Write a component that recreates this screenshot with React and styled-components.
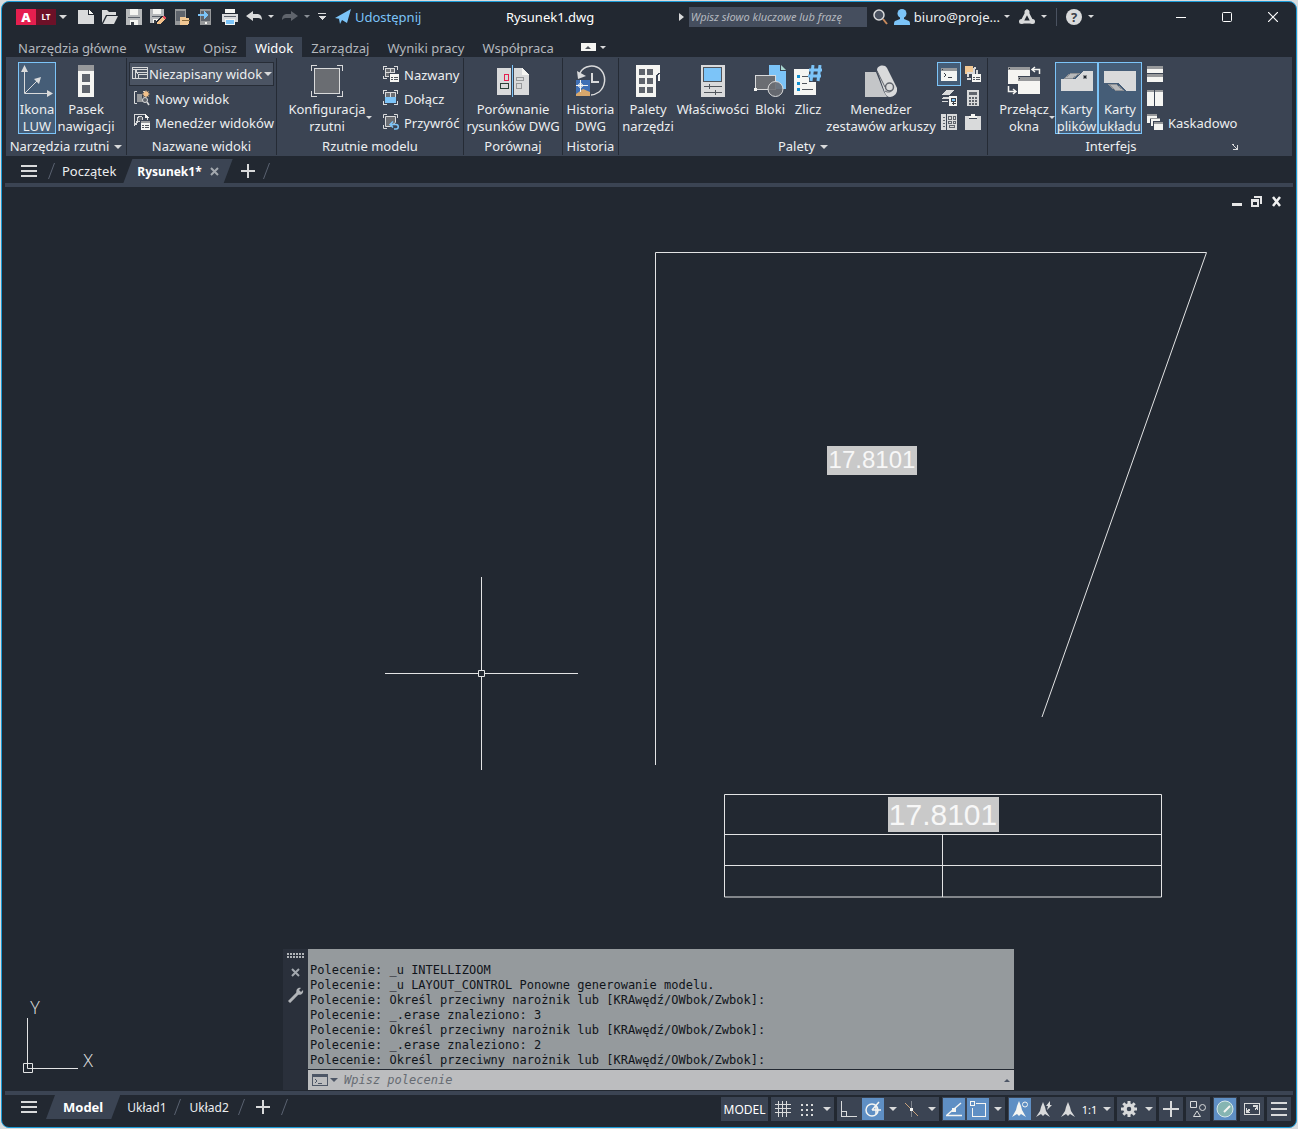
import React, {useState} from 'react'
import styled, {createGlobalStyle} from 'styled-components';

const GlobalStyle = createGlobalStyle`
    * {
        box-sizing: border-box;
    }
    body {
        margin: 0;
        background: #d9dcde;
        font-family: "Noto Sans", "Open Sans", sans-serif;
        font-size: 13px;
        color: #eceef0;
    }
    button, input, select {
        font: inherit;
        color: inherit;
        margin: 0;
        padding: 0;
        border: 0;
        background: none;
        outline: none;
    }
    svg {
        display: block;
        flex: none;
    }
`;
const Page = styled.div`
    min-height: 100vh;
    padding: 1px;
    display: flex;
`;
const Frame = styled.div`
    flex: 1;
    min-width: 0;
    display: flex;
    flex-direction: column;
    background: #222831;
    border: 1px solid #1b9bd7;
    border-radius: 8px;
    overflow: hidden;
`;
const Caret = styled.span`
    flex: none;
    width: 0;
    height: 0;
    border: ${p => p.$size || 3}px solid transparent;
    border-top-color: ${p => p.$color || '#d9dadb'};
    border-bottom: 0;
`;

/* title bar */
const TitleBar = styled.header`
    height: 35px;
    padding: 0 0 6px 14px;
    display: flex;
    align-items: center;
`;
const QuickAccess = styled.div`
    display: flex;
    align-items: center;
    gap: 8px;
`;
const LogoButton = styled.button`
    display: flex;
    align-items: center;
    gap: 3px;
    margin-right: 3px;
`;
const Logo = styled.span`
    display: flex;
    height: 16px;
    font-weight: 700;
    color: #fff;
    background: #6d1128;
`;
const LogoA = styled.span`
    width: 20px;
    text-align: center;
    line-height: 16px;
    font-size: 13px;
    font-weight: 900;
    background: #e51f4f;
`;
const LogoLt = styled.span`
    width: 20px;
    text-align: center;
    line-height: 16px;
    font-size: 8px;
`;
const IconButton = styled.button`
    height: 20px;
    display: flex;
    align-items: center;
    justify-content: center;
    gap: ${p => p.$gap || 0}px;
`;
const ShareButton = styled(IconButton)`
    margin-left: 1px;
    gap: 4px;
    font-size: 13px;
    color: #7cc4f8;
`;
const FileName = styled.div`
    flex: 1;
    text-align: center;
    font-size: 13px;
    color: #fff;
`;
const TitleRight = styled.div`
    display: flex;
    align-items: center;
`;
const Play = styled.span`
    border: 4px solid transparent;
    border-left: 5px solid #d9dadb;
    border-right: 0;
    margin-right: 5px;
`;
const Search = styled.input`
    width: 178px;
    height: 20px;
    padding: 0 2px;
    background: #454e5e;
    font-size: 11px;
    font-style: italic;
    &::placeholder {
        color: #b4b8be;
        opacity: 1;
    }
`;
const Account = styled.div`
    display: flex;
    align-items: center;
    gap: ${p => p.$gap || 9}px;
    margin-left: ${p => p.$left || 0}px;
`;
const Divider = styled.span`
    width: 1px;
    height: 18px;
    background: #4a5260;
`;
const WindowButtons = styled.div`
    display: flex;
    margin-left: 64px;
`;
const WindowButton = styled(IconButton)`
    width: 46px;
`;

/* ribbon */
const Tabs = styled.nav`
    height: 20px;
    padding-left: 7px;
    display: flex;
`;
const Tab = styled.button`
    padding: 1px 9px 0;
    line-height: 20px;
    color: ${p => (p.$active ? '#fff' : '#b3b7bd')};
    background: ${p => (p.$active ? '#3b4453' : 'none')};
`;
const TabToggle = styled(IconButton)`
    margin-left: 18px;
    gap: 4px;
`;
const ToggleBox = styled.span`
    width: 15px;
    height: 8px;
    display: flex;
    align-items: center;
    justify-content: center;
    background: #f5f5f2;
`;
const CaretUp = styled.span`
    border: 3px solid transparent;
    border-bottom-color: ${p => p.$color || '#50555c'};
    border-top: 0;
`;
const Ribbon = styled.div`
    height: 99px;
    margin: 0 4px;
    display: flex;
    background: #3b4453;
`;
const Panel = styled.section`
    flex: none;
    width: ${p => p.$width}px;
    margin: 1px 0;
    padding-top: 4px;
    border-right: ${p => (p.$last ? 0 : 1)}px solid #252b35;
    display: flex;
    flex-direction: column;
`;
const PanelBody = styled.div`
    height: 76px;
    padding-left: ${p => p.$left || 0}px;
    display: flex;
    align-items: flex-start;
    gap: ${p => p.$gap || 0}px;
`;
const PanelTitle = styled.div`
    height: 17px;
    line-height: 17px;
    display: flex;
    align-items: center;
    justify-content: center;
    gap: 5px;
    white-space: nowrap;
`;
const Launcher = styled.button`
    margin-left: auto;
    margin-right: 2px;
`;
const BigButton = styled.button`
    flex: none;
    width: ${p => p.$width}px;
    height: 72px;
    border: 1px solid ${p => (p.$active ? '#7cc4f8' : 'transparent')};
    background: ${p => (p.$active ? '#455d77' : 'none')};
    padding-top: 2px;
    display: flex;
    flex-direction: column;
    align-items: center;
    gap: 4px;
    line-height: 17px;
    white-space: pre;
`;
const CaretButton = styled.button`
    width: 6px;
    height: 72px;
    padding-top: 38px;
    display: flex;
    align-items: center;
    justify-content: center;
`;
const Column = styled.div`
    display: flex;
    flex-direction: column;
    flex: ${p => (p.$grow ? 1 : 'none')};
    min-width: 0;
    padding: 0 2px;
`;
const SmallButton = styled.button`
    height: 24px;
    display: flex;
    align-items: center;
    gap: 5px;
    padding-left: ${p => p.$left || 0}px;
    white-space: nowrap;
`;
const SmallLabel = styled.span`
    padding-top: 2px;
`;
const Combo = styled.label`
    height: 24px;
    padding: 0 1px 0 2px;
    display: flex;
    align-items: center;
    gap: 1px;
    border: 1px solid #272d37;
    background: #4b5463;
`;
const ComboSelect = styled.select`
    flex: 1;
    min-width: 0;
    appearance: none;
`;
const IconGrid = styled.div`
    display: grid;
    grid-template-columns: 24px 24px;
    grid-auto-rows: 24px;
    margin-left: 3px;
`;
const GridButton = styled.button`
    display: flex;
    align-items: center;
    justify-content: center;
    border: 1px solid ${p => (p.$active ? '#7cc4f8' : 'transparent')};
    background: ${p => (p.$active ? '#455d77' : 'none')};
`;

/* file tabs and layout tabs */
const TabStrip = styled.nav`
    height: ${p => p.$height}px;
    padding-left: 19px;
    padding-top: ${p => p.$top || 0}px;
    display: flex;
    align-items: flex-start;
`;
const StripItem = styled.button`
    height: 24px;
    padding: 0 ${p => p.$pad || 0}px;
    display: flex;
    align-items: center;
    gap: 8px;
    white-space: nowrap;
    font-size: ${p => p.$size || 13}px;
`;
const ActiveItem = styled(StripItem)`
    margin-left: ${p => p.$left || 0}px;
    font-weight: 700;
    color: #fff;
    background: #3b4453;
    clip-path: polygon(9px 0, 100% 0, calc(100% - 9px) 100%, 0 100%);
`;
const Slash = styled.span`
    height: 24px;
    padding-left: ${p => p.$left || 0}px;
    display: flex;
    align-items: center;
`;
const Rule = styled.div`
    height: 4px;
    margin: 0 3px;
    background: #3b4453;
`;

/* drawing area */
const Canvas = styled.main`
    flex: 1;
    min-height: 500px;
    position: relative;
    overflow: hidden;
`;
const Drawing = styled.svg`
    width: 100%;
    height: 100%;
    position: absolute;
    inset: 0;
    font-family: "Liberation Sans", Arial, sans-serif;
`;
const ViewControls = styled.div`
    position: absolute;
    top: 9px;
    right: 14px;
    display: flex;
    gap: 9px;
`;
const UcsIcon = styled.svg`
    position: absolute;
    left: 18px;
    bottom: 15px;
    font-family: "Open Sans", sans-serif;
    font-weight: 300;
`;
const CommandWindow = styled.section`
    position: absolute;
    left: 281px;
    bottom: 1px;
    width: 731px;
    display: flex;
    background: #2a303b;
`;
const CommandGrip = styled.div`
    width: 25px;
    padding-top: 4px;
    display: flex;
    flex-direction: column;
    align-items: center;
    gap: 10px;
`;
const CommandMain = styled.div`
    flex: 1;
    min-width: 0;
    font-family: "DejaVu Sans Mono", "Liberation Mono", monospace;
    font-size: 12px;
    color: #10141a;
`;
const History = styled.div`
    padding: 14px 2px 1px;
    line-height: 15px;
    white-space: pre;
    background: #959a9d;
    border-bottom: 1px solid #222831;
`;
const Prompt = styled.label`
    height: 20px;
    padding: 0 4px;
    display: flex;
    align-items: center;
    gap: 2px;
    background: #bcbdbf;
`;
const PromptInput = styled.input`
    flex: 1;
    margin-left: 4px;
    font-size: 12px;
    font-style: italic;
    &::placeholder {
        color: #666b72;
        opacity: 1;
    }
`;

/* status bar */
const Footer = styled.footer`
    height: 32px;
    padding-right: 5px;
    display: flex;
    justify-content: space-between;
`;
const StatusBar = styled.div`
    padding-top: 2px;
    display: flex;
    gap: 3px;
`;
const StatusGroup = styled.div`
    height: 24px;
    padding: 0 1px;
    display: flex;
    align-items: center;
    gap: 2px;
    background: #3b4453;
`;
const StatusButton = styled.button`
    width: ${p => p.$width || 22}px;
    height: 22px;
    display: flex;
    align-items: center;
    justify-content: center;
    font-size: ${p => p.$size || 12}px;
    color: #fff;
    background: ${p => (p.$active ? '#5f8fc4' : 'none')};
`;

const Svg = ({w = 16, h = 16, crisp = true, children}) => (
    <svg
        width={w}
        height={h}
        viewBox={`0 0 ${w} ${h}`}
        fill="none"
        shapeRendering={crisp ? 'crispEdges' : 'auto'}
        aria-hidden="true"
    >
        {children}
    </svg>
);

const L = '#d9dadb';
const W = '#f5f5f2';
const B = '#7cc4f8';
const G = '#97999b';
const D = '#3b4453';

const icons = {
    newFile: <Svg><path d="M0 1h10v5h6v9H0z" fill={L}/><path d="M11 1l5 4h-5z" fill={W}/></Svg>,
    open: <Svg crisp={false}><path d="M0 14V1h5l2 2h7v3H4z" fill={L}/><path d="M5 7h11l-4 8H1z" fill={L}/></Svg>,
    save: <Svg><path d="M0 0h16v16H0z" fill="#b7b9bb"/><path d="M4 0h8v6H4z" fill={W}/><path d="M2 8h12v1H2z" fill="#5a6069"/><path d="M4 11h8v5H4z" fill={W}/><path d="M5 13h3v3H5z" fill="#3b4048"/></Svg>,
    saveAs: (
        <Svg>
            <path d="M0 0h14v8l-6 6H0z" fill="#b7b9bb"/><path d="M3 0h8v5H3z" fill={W}/>
            <path d="M2 7h10v1H2z" fill="#5a6069"/><path d="M3 10h6v4H3z" fill={W}/><path d="M4 11h2v3H4z" fill="#3b4048"/>
            <path d="M6 16v-4l6-5 4 4-6 5z" fill="#222831"/><path d="M7 15l1-3 5-4 2 2-5 5z" fill="#f2c08a"/><path d="M12 8l2-1 2 2-1 2z" fill="#e2475a"/>
        </Svg>
    ),
    openPhone: <Svg><path d="M1 0h11v16H1z" fill={G}/><path d="M2 2h9v10H2z" fill="#5f646c"/><path d="M6 8h5l1 1h3v2h1l-2 5H6z" fill="#f2c894"/><path d="M8 11h8" stroke="#8a6a3c"/></Svg>,
    savePhone: <Svg><path d="M2 0h11v16H2z" fill={G}/><path d="M3 2h9v10H3z" fill="#5f646c"/><path d="M7 13h2v2H7z" fill={W}/><path d="M0 5h6V2l5 4-5 4V7H0z" fill={B}/></Svg>,
    print: <Svg><path d="M3 0h10v4H3z" fill={W}/><path d="M0 5h16v8H0z" fill={L}/><path d="M2 7h12v1H2z" fill="#5a6069"/><path d="M3 10h10v6H3z" fill={W}/><path d="M4 11h8v4H4z" fill={B}/></Svg>,
    undo: <Svg crisp={false}><path d="M0 7l7-5v3h4c3 0 5 2 5 6-2-2-3-2-5-2H7v3z" fill={L}/></Svg>,
    redo: <Svg crisp={false}><path d="M16 7L9 2v3H5c-3 0-5 2-5 6 2-2 3-2 5-2h4v3z" fill="#5f646c"/></Svg>,
    more: <Svg w={8} h={7}><path d="M0 0h8v1H0z" fill={L}/><path d="M0 3h8L4 7z" fill={L}/></Svg>,
    plane: <Svg crisp={false}><path d="M0 9l16-9-4 14-5-3-2 4-1-5 8-6-7 6z" fill={B}/></Svg>,
    magnifier: <Svg crisp={false}><path d="M10 10l4 5" stroke="#c98a5c" strokeWidth="2"/><circle cx="6" cy="6" r="5" fill="#4a5260" stroke={L} strokeWidth="1.5"/></Svg>,
    user: <Svg crisp={false}><circle cx="8" cy="4.500" r="4.500" fill={B}/><path d="M6 7h4v3l5 2c1 1 1 2 1 4H0c0-2 0-3 1-4l5-2z" fill={B}/></Svg>,
    autodesk: <Svg crisp={false}><path d="M3 12.500L8 3l5 9.500M3 13h10" stroke={L} strokeWidth="3"/><circle cx="8" cy="3" r="2.500" fill={L}/><circle cx="2.500" cy="12.500" r="2.500" fill={L}/><circle cx="13.500" cy="12.500" r="2.500" fill={L}/></Svg>,
    min: <Svg w={10} h={10}><path d="M0 5h10" stroke="#fff"/></Svg>,
    max: <Svg w={10} h={10} crisp={false}><rect x=".5" y=".5" width="9" height="9" rx="1" stroke="#fff"/></Svg>,
    close: <Svg w={10} h={10} crisp={false}><path d="M0 0l10 10M10 0L0 10" stroke="#fff" strokeWidth="1.2"/></Svg>,
    ucs: (
        <Svg w={34} h={32} crisp={false}>
            <path d="M4.500 4v24.500H30M5 28L18 15" stroke={L}/>
            <path d="M4.500 0L8 7H1zM33 28.500L27 25v7zM21 12l-2 7-5-5z" fill={L}/>
        </Svg>
    ),
    navBar: <Svg h={32}><path d="M0 0h16v6H0z" fill={G}/><path d="M0 6h16v26H0z" fill={W}/><path d="M4 9h8v8H4zM4 20h8v8H4z" fill="#5f646c"/></Svg>,
    view: <Svg><path d="M.5 12.500V1.500h15v11H.5zM.5 3.500h15M3.500 12.500v-9M3.500 6.500h12M6.500 12.500v-4h9M4 4l2 4" stroke={L}/></Svg>,
    newView: (
        <Svg crisp={false}>
            <path d="M3 1.500H.5v12H3M9 1.500h2" stroke={L}/><path d="M3 4h5v5l3 3H3z" fill={G}/>
            <circle cx="11" cy="10" r="2.500" fill="#5f646c" stroke={L}/><path d="M13 12l2 3" stroke={L} strokeWidth="1.500"/>
            <path d="M12 0l1 2 2-1-1 2 2 1-2 1 1 2-2-1-1 2-1-2-2 1 1-2-2-1 2-1-1-2 2 1z" fill="#f2c08a"/>
        </Svg>
    ),
    viewManager: (
        <Svg>
            <path d="M.5 12V.500h10l3 3V7" stroke={L}/><path d="M11 0l4 4h-4z" fill={W}/><circle cx="6" cy="5" r="2.500" fill="#5f646c" stroke={L}/><path d="M4 7l-3 4" stroke={L} strokeWidth="2"/>
            <path d="M6 6h10v10H6z" fill={D}/><path d="M7 7h9v9H7z" fill={W}/><path d="M7 8h9" stroke={G} strokeWidth="2"/><path d="M8 11h2v1H8zM11 11h4v1h-4zM8 13h2v1H8zM11 13h4v1h-4z" fill="#50555c"/>
        </Svg>
    ),
    viewport: (
        <Svg w={32} h={32}>
            <path d="M6 .5H.5V6M26 .5h5.500V6M6 31.500H.5V26M26 31.500h5.500V26" stroke={L}/>
            <rect x="3.500" y="3.500" width="25" height="25" fill="#6a6d72" stroke={L}/>
        </Svg>
    ),
    named: (
        <Svg>
            <path d="M4 .5H.5V4M11 .5h3.500V4M4 12.500H.5V10" stroke={L}/><rect x="2.500" y="2.500" width="9" height="8" fill="#6a6d72" stroke={L}/><path d="M7 3v8M3 6.500h9" stroke={L}/>
            <path d="M6 7h10v9H6z" fill={D}/><path d="M7 8h9v8H7z" fill={W}/><path d="M8 11h2v1H8zM11 11h4v1h-4zM8 13h2v1H8zM11 13h4v1h-4z" fill="#50555c"/>
        </Svg>
    ),
    join: <Svg><path d="M4 .5H.5V4M11 .5h3.500V4M4 14.500H.5V11M11 14.500h3.500V11" stroke={L}/><rect x="2" y="2" width="11" height="5" fill="#6a6d72"/><path d="M2 7h11v6H2z" fill={B}/><path d="M2.500 7V2.500h10V7M7.500 3v4" stroke={L}/></Svg>,
    restore: (
        <Svg crisp={false}>
            <path d="M4 .5H.5V4M11 .5h3.500V4M4 14.500H.5V11" stroke={L}/><path d="M2.500 2.500h10v6l-5 4h-5z" fill="#6a6d72" stroke={L}/>
            <path d="M7 10.500h6c3 0 3 4.500 0 4.500h-2M10 7.500l-3 3 3 3" stroke={B} strokeWidth="1.500"/>
        </Svg>
    ),
    compare: (
        <Svg w={34} h={32}>
            <path d="M1 3h14v27H1z" fill={L}/><path d="M18 3h8v6h7v21H18z" fill={L}/><path d="M26 3l7 7h-7z" fill={W}/>
            <path d="M16.500 0v32" stroke={B}/><rect x="8.500" y="9.500" width="4" height="6" stroke="#e51f4f"/><rect x="4.500" y="18.500" width="8" height="5" stroke="#2b4038"/>
            <rect x="20.500" y="12.500" width="7" height="3" stroke={G}/><rect x="20.500" y="18.500" width="5" height="5" stroke={G}/>
        </Svg>
    ),
    historyDwg: (
        <Svg w={32} h={32} crisp={false}>
            <path d="M5 8C9 0 20-1 26 5c6 7 4 17-2 22-3 2-6 3-8 3" stroke={L} strokeWidth="1.500"/><path d="M2 6l1 8 8-3z" fill={L}/>
            <path d="M17 8v9h7" stroke={L} strokeWidth="2"/><path d="M1 15h14v16H1z" fill="#3f6fb5"/><path d="M1 29l7-5 7 3v4H1z" fill="#d9a86c"/>
            <path d="M1 20.500h12M5.500 15v12" stroke={W}/><circle cx="5.500" cy="20.500" r="2" stroke={W}/>
        </Svg>
    ),
    palettes: (
        <Svg w={26} h={32}>
            <path d="M1 0h24v8h-2l-2 3v21H1z" fill={W}/><path d="M23 10l2-2v8h-2z" fill={W}/>
            {[4, 13, 22].map(y => <path key={y} d={`M4 ${y}h6v6H4zM12 ${y}h6v6h-6z`} fill="#5f646c"/>)}
        </Svg>
    ),
    properties: (
        <Svg w={24} h={32}>
            <path d="M0 0h24v32H0z" fill={L}/><path d="M2.500 2.500h18v14h-18z" fill={B} stroke="#50555c"/>
            <path d="M3 21.500h18M3 27.500h18M8.500 19v5M14.500 25v5" stroke="#50555c"/>
        </Svg>
    ),
    blocks: (
        <Svg w={32} h={32} crisp={false}>
            <path d="M15 0h11v6h6v18H15z" fill={B}/><path d="M27 0l5 5h-5z" fill="#a9d8d0"/>
            <rect x="1.500" y="10.500" width="20" height="14" fill="#6a6d72" stroke={L}/><circle cx="21.500" cy="24" r="7.500" fill="#6a6d72" fillOpacity=".9" stroke={L}/><path d="M0 23h3v3H0z" fill={W}/>
        </Svg>
    ),
    count: (
        <Svg w={28} h={32}>
            <path d="M0 4h15v13h7v13H0z" fill={W}/><path d="M3 10h3v3H3zM3 17h3v3H3zM3 23h3v3H3z" fill="#0f8fd0"/>
            <path d="M8 11.500h6M8 18.500h5M8 24.500h11" stroke="#50555c"/><path d="M19 0l-2 16M26 0l-2 16M15 5h13M14 11h13" stroke={B} strokeWidth="3" shapeRendering="auto"/>
        </Svg>
    ),
    sheets: (
        <Svg w={32} h={32} crisp={false}>
            <path d="M0 7h11l8 20 3 5H0z" fill="#c4c6c8"/><path d="M12 5c0-5 8-6 10-2l10 20c1 5-3 9-7 9-3 0-4-2-5-4z" fill={L}/>
            <path d="M12 6l8 16" stroke="#5f646c"/><circle cx="24.500" cy="22" r="4" stroke="#5f646c" strokeWidth="1.500"/><path d="M28 24c-1 3-5 4-8 2" stroke="#5f646c"/>
        </Svg>
    ),
    terminal: <Svg h={13}><path d="M0 0h16v13H0z" fill={W}/><path d="M0 0h16v3H0z" fill={G}/><path d="M1 1h1v1H1z" fill="#3b4048"/><path d="M3 5l2 2-2 2M7 9.500h4" stroke="#3b4048"/></Svg>,
    xref: <Svg><path d="M0 0h8v8H0z" fill="#f2c894"/><path d="M9 2v5H3v4M12 4v4M9 2h2M2 13h4" stroke={L} strokeWidth="2"/><path d="M7 8h9v8H7z" fill={W}/><path d="M8 11h2v1H8zM11 11h4v1h-4zM8 13h2v1H8zM11 13h4v1h-4z" fill="#50555c"/></Svg>,
    layers: <Svg><path d="M5 0h8L8 5H0zM3 7h5v1L7 9H0zM2 11h5v1H0z" fill={L}/><path d="M8 6h8v10H8z" fill={W}/><path d="M10 8h4v3h-4z" fill={B} stroke="#3b4048"/><path d="M12 12v3M10.500 13.500h4" stroke="#3b4048"/></Svg>,
    calculator: <Svg><path d="M2 0h12v16H2z" fill={L}/><path d="M4 2h8v3H4z" fill="#5f646c"/>{[7, 10, 13].map(y => <path key={y} d={`M4 ${y}h2v2H4zM7 ${y}h2v2H7zM10 ${y}h2v2h-2z`} fill="#5f646c"/>)}</Svg>,
    markup: <Svg><path d="M0 0h5v16H0zM6 0h10v16H6z" fill={L}/><path d="M2 3.500h2M2 6.500h2M2 9.500h2M2 12.500h2" stroke="#5f646c"/><path d="M7.500 2.500h3v3h-3zM12.500 2.500h2v3h-2zM7.500 7.500h3v2h-3zM12.500 7.500h2v2h-2zM8.500 11.500h5v2h-5z" stroke="#5f646c"/></Svg>,
    clipboard: <Svg><path d="M0 2h4v3h8V2h4v14H0z" fill={L}/><path d="M4 2h2V0h4v2h2v2H4z" fill={W}/></Svg>,
    switchWindow: (
        <Svg w={34} h={32}>
            <path d="M1 3h22v8H11v8H1z" fill={W}/><path d="M1 2h22v3H1z" fill={G}/><path d="M11 13h22v16H11z" fill={W}/><path d="M11 12h22v4H11z" fill={G}/><path d="M2 3h1v1H2zM12 13h1v1h-1z" fill="#22282f"/>
            <path d="M32.500 9V4.500H26M28 2l-3 2.500L28 7M1.500 21v5.500H8M6 24l3 2.500L6 29" stroke={W} strokeWidth="1.500" shapeRendering="auto"/>
        </Svg>
    ),
    fileTabs: <Svg w={34} h={32}><path d="M1 14h14l8-8h10v20H1z" fill={L}/><path d="M5 13l6-5h9l-7 5z" fill="#b7b9bb" stroke="#8d9094"/><path d="M23 10h4v4h-4z" fill="#8d9094"/><path d="M24 11h2v2h-2z" fill="#22282f"/></Svg>,
    layoutTabs: <Svg w={34} h={32}><path d="M1 6h32v20H23l-8-8H1z" fill={L}/><path d="M5 19h8l7 6h-8z" fill="#b7b9bb" stroke="#8d9094"/></Svg>,
    tileH: <Svg><path d="M0 1h16v6H0zM0 9h16v7H0z" fill={W}/><path d="M0 0h16v3H0zM0 8h16v3H0z" fill={G}/></Svg>,
    tileV: <Svg><path d="M0 0h7v16H0zM8 0h8v16H8z" fill={W}/><path d="M0 0h7v2H0zM8 0h8v2H8z" fill={G}/></Svg>,
    cascade: <Svg><path d="M0 1h10v3H3v5H0z" fill={W}/><path d="M3 4h10v3H6v5H3z" fill={W} stroke={D}/><path d="M6.500 7.500H16V16H6.500z" fill={W}/><path d="M0 0h10v2H0zM3 4h10v1H3zM7 8h9v2H7z" fill={G}/></Svg>,
    launcher: <Svg w={6} h={6}><path d="M0 .5h2M1 1l4 4M5.500 1v4.500H1" stroke={L}/></Svg>,
    menu: <Svg h={12}><path d="M0 0h16v2H0zM0 5h16v2H0zM0 10h16v2H0z" fill={L}/></Svg>,
    slash: <Svg w={7} crisp={false}><path d="M.5 16l6-16" stroke="#5a6270"/></Svg>,
    plus: <Svg w={14} h={14}><path d="M6 0h2v6h6v2H8v6H6V8H0V6h6z" fill={L}/></Svg>,
    tabClose: <Svg w={9} h={9} crisp={false}><path d="M1 1l7 7M8 1L1 8" stroke="#a3a8ae" strokeWidth="2"/></Svg>,
    viewMin: <Svg w={11} h={11}><path d="M1 7h10v3H1z" fill="#e6e6e6"/></Svg>,
    viewRestore: <Svg w={11} h={11}><path d="M3 0h8v8H9V2H3z" fill="#e6e6e6"/><path d="M0 3h8v8H0zM2 6v3h4V6z" fill="#e6e6e6" fillRule="evenodd"/></Svg>,
    viewClose: <Svg w={11} h={11} crisp={false}><path d="M2 1l7 9M9 1L2 10" stroke="#f0f0f0" strokeWidth="2.500"/></Svg>,
    grip: <Svg w={17} h={5}>{[0, 3, 6, 9, 12, 15].map(x => <path key={x} d={`M${x} 0h2v2h-2zM${x} 3h2v2h-2z`} fill="#b1b4b8"/>)}</Svg>,
    wrench: <Svg crisp={false}><path d="M1 15L10 6" stroke="#b1b4b8" strokeWidth="3"/><path d="M9 7C7 3 10 0 13 1l-2 2 2 2 2-2c1 4-3 6-6 4z" fill="#b1b4b8"/></Svg>,
    prompt: <Svg h={12}><path d="M.5.5h15v11H.5z" stroke="#4d5666"/><path d="M0 0h16v3H0z" fill="#4d5666"/><path d="M3 5l2 2-2 2M6 9.500h4" stroke="#4d5666"/></Svg>,
    grid: <Svg><path d="M3.500 0v16M7.500 0v16M11.500 0v16M0 3.500h16M0 7.500h16M0 11.500h16" stroke={L}/></Svg>,
    dots: <Svg w={13} h={13}>{[1, 6, 11].map(y => <path key={y} d={`M0 ${y}h2v2H0zM5 ${y}h2v2H5zM10 ${y}h2v2h-2z`} fill={L}/>)}</Svg>,
    ortho: <Svg><path d="M.5 0v15.500H16M.5 10.500h5V15" stroke={L}/></Svg>,
    polar: <Svg crisp={false}><circle cx="7" cy="9" r="6" stroke={W} strokeWidth="1.500"/><path d="M7 9h9M7 9l7-8M11 4v9" stroke={W} strokeWidth="1.500"/></Svg>,
    iso: <Svg crisp={false}><path d="M1 2l13 13" stroke="#c9a27c"/><path d="M7.500 0v16" stroke="#7d838c"/><path d="M6 7h3v3H6z" fill={W}/></Svg>,
    osnapTrack: <Svg crisp={false}><path d="M0 14.500h16M1 14L15 2" stroke={W} strokeWidth="1.500"/><path d="M6 7h4v4H6z" fill={W}/></Svg>,
    osnap: <Svg><path d="M6 2.500h9.500v13H2.500V7" stroke={W}/><path d="M.5.5h4v4h-4z" stroke={W}/></Svg>,
    annoVis: <Svg crisp={false}><path d="M7 0l2 5 1 4 4 7-5-3-2 2-2-2-5 3 4-7 1-4z" fill={W}/><circle cx="13" cy="3.500" r="2.500" stroke={W}/></Svg>,
    annoAuto: <Svg crisp={false}><path d="M7 1l2 5 1 4 4 6-5-3-2 2-2-2-5 3 4-6 1-4z" fill={L}/><path d="M14 0l-4 5h2l-1 4 5-5h-2z" fill={L}/></Svg>,
    anno: <Svg crisp={false}><path d="M8 1l2 5 1 4 4 6-5-3-2 2-2-2-5 3 4-6 1-4z" fill={L}/></Svg>,
    gear: <Svg crisp={false}><circle cx="8" cy="8" r="4" stroke={L} strokeWidth="3.500"/><path d="M8 0v3M8 13v3M0 8h3M13 8h3M2.300 2.300l2 2M11.700 11.700l2 2M2.300 13.700l2-2M11.700 4.300l2-2" stroke={L} strokeWidth="3"/></Svg>,
    plusBig: <Svg><path d="M7 0h2v16H7zM0 7h16v2H0z" fill={L}/></Svg>,
    shapes: <Svg crisp={false}><path d="M.5.5h6v6h-6zM7 10l3.500 5.500h-7z" stroke={L}/><circle cx="12.500" cy="6.500" r="3" stroke={L}/></Svg>,
    perf: <Svg w={18} h={18} crisp={false}><circle cx="9" cy="9" r="8" fill="#86b5b2" stroke="#d5e6e8"/><path d="M8 12l6-6" stroke={W} strokeWidth="2"/></Svg>,
    clean: <Svg h={12}><path d="M.5.5h15v11H.5z" stroke={L}/><path d="M9 2h5v5h-1V5l-2 2-1-1 2-2H9zM2 5h1v2l2-1 1 1-2 2h2v1H2z" fill={L}/></Svg>,
    menuBig: <Svg h={14}><path d="M0 0h16v2H0zM0 6h16v2H0zM0 12h16v2H0z" fill={L}/></Svg>,
    help: <Svg crisp={false}><circle cx="8" cy="8" r="8" fill={L}/><text x="8" y="13" textAnchor="middle" fontSize="13" fontWeight="700" fill="#3b4048">?</text></Svg>,
};

const quickAccess = [
    ['Nowy', 'newFile'],
    ['Otwórz', 'open'],
    ['Zapisz', 'save'],
    ['Zapisz jako', 'saveAs'],
    ['Otwórz z aplikacji mobilnej', 'openPhone'],
    ['Zapisz w aplikacji mobilnej', 'savePhone'],
    ['Drukuj', 'print'],
];

const menuTabs = ['Narzędzia główne', 'Wstaw', 'Opisz', 'Widok', 'Zarządzaj', 'Wyniki pracy', 'Współpraca'];

const paletteIcons = [
    ['Wiersz polecenia', 'terminal'],
    ['Odnośniki', 'xref'],
    ['Warstwy', 'layers'],
    ['Kalkulator', 'calculator'],
    ['Adiustacje', 'markup'],
    ['Schowek', 'clipboard'],
];

const historyLines = [
    'Polecenie: _u INTELLIZOOM',
    'Polecenie: _u LAYOUT_CONTROL Ponowne generowanie modelu.',
    'Polecenie: Określ przeciwny narożnik lub [KRAwędź/OWbok/Zwbok]:',
    'Polecenie: _.erase znaleziono: 3',
    'Polecenie: Określ przeciwny narożnik lub [KRAwędź/OWbok/Zwbok]:',
    'Polecenie: _.erase znaleziono: 2',
    'Polecenie: Określ przeciwny narożnik lub [KRAwędź/OWbok/Zwbok]:',
];

const Big = ({icon, label, width, active}) => (
    <BigButton $width={width} $active={active}>
        {icons[icon]}
        <span>{label}</span>
    </BigButton>
);

const Small = ({icon, label, left, title}) => (
    <SmallButton $left={left} aria-label={title}>
        {icons[icon]}
        {label ? <SmallLabel>{label}</SmallLabel> : null}
    </SmallButton>
);

const Status = ({icon, label, title, ...rest}) => (
    <StatusButton aria-label={title} {...rest}>
        {icon ? icons[icon] : label}
    </StatusButton>
);

const StatusCaret = ({title}) => (
    <StatusButton $width={13} aria-label={title}><Caret $size={4}/></StatusButton>
);

const Title = () => (
    <TitleBar>
        <QuickAccess>
            <LogoButton aria-label="Menu aplikacji">
                <Logo><LogoA>A</LogoA><LogoLt>LT</LogoLt></Logo>
                <Caret $size={4}/>
            </LogoButton>
            {quickAccess.map(([title, icon]) => (
                <IconButton key={icon} aria-label={title}>{icons[icon]}</IconButton>
            ))}
            <IconButton $gap={6} aria-label="Cofnij">{icons.undo}<Caret/></IconButton>
            <IconButton $gap={6} aria-label="Ponów">{icons.redo}<Caret $color="#8a8f96"/></IconButton>
            <IconButton aria-label="Dostosuj">{icons.more}</IconButton>
            <ShareButton>{icons.plane}<span>Udostępnij</span></ShareButton>
        </QuickAccess>
        <FileName>Rysunek1.dwg</FileName>
        <TitleRight>
            <Play/>
            <Search aria-label="Wyszukaj" placeholder="Wpisz słowo kluczowe lub frazę"/>
            <Account $left={6}>
                <Account $gap={5}>
                    <IconButton aria-label="Szukaj">{icons.magnifier}</IconButton>
                    <IconButton $gap={4}>{icons.user}<span>biuro@proje...</span><Caret/></IconButton>
                </Account>
                <IconButton $gap={6} aria-label="Autodesk App Store">{icons.autodesk}<Caret/></IconButton>
                <Divider/>
                <IconButton $gap={6} aria-label="Pomoc">{icons.help}<Caret/></IconButton>
            </Account>
            <WindowButtons>
                <WindowButton aria-label="Minimalizuj">{icons.min}</WindowButton>
                <WindowButton aria-label="Maksymalizuj">{icons.max}</WindowButton>
                <WindowButton aria-label="Zamknij">{icons.close}</WindowButton>
            </WindowButtons>
        </TitleRight>
    </TitleBar>
);

const RibbonPanels = () => (
    <Ribbon>
        <Panel $width={121}>
            <PanelBody $left={12} $gap={2}>
                <Big icon="ucs" label={'Ikona\nLUW'} width={38} active/>
                <Big icon="navBar" label={'Pasek\nnawigacji'} width={56}/>
            </PanelBody>
            <PanelTitle>Narzędzia rzutni<Caret $size={4}/></PanelTitle>
        </Panel>
        <Panel $width={150}>
            <PanelBody>
                <Column $grow>
                    <Combo>
                        {icons.view}
                        <ComboSelect aria-label="Widok">
                            <option>Niezapisany widok</option>
                        </ComboSelect>
                        <Caret $size={4}/>
                    </Combo>
                    <Small icon="newView" label="Nowy widok" left={5}/>
                    <Small icon="viewManager" label="Menedżer widoków" left={5}/>
                </Column>
            </PanelBody>
            <PanelTitle>Nazwane widoki</PanelTitle>
        </Panel>
        <Panel $width={187}>
            <PanelBody $left={11}>
                <Big icon="viewport" label={'Konfiguracja\nrzutni'} width={78}/>
                <CaretButton aria-label="Lista konfiguracji"><Caret/></CaretButton>
                <Column>
                    <Small icon="named" label="Nazwany" left={9}/>
                    <Small icon="join" label="Dołącz" left={9}/>
                    <Small icon="restore" label="Przywróć" left={9}/>
                </Column>
            </PanelBody>
            <PanelTitle>Rzutnie modelu</PanelTitle>
        </Panel>
        <Panel $width={99}>
            <PanelBody>
                <Big icon="compare" label={'Porównanie\nrysunków DWG'} width={98}/>
            </PanelBody>
            <PanelTitle>Porównaj</PanelTitle>
        </Panel>
        <Panel $width={56}>
            <PanelBody>
                <Big icon="historyDwg" label={'Historia\nDWG'} width={55}/>
            </PanelBody>
            <PanelTitle>Historia</PanelTitle>
        </Panel>
        <Panel $width={369}>
            <PanelBody $left={3}>
                <Big icon="palettes" label={'Palety\nnarzędzi'} width={52}/>
                <Big icon="properties" label="Właściwości" width={78}/>
                <Big icon="blocks" label="Bloki" width={36}/>
                <Big icon="count" label="Zlicz" width={40}/>
                <Big icon="sheets" label={'Menedżer\nzestawów arkuszy'} width={106}/>
                <IconGrid>
                    {paletteIcons.map(([title, icon], i) => (
                        <GridButton key={icon} $active={i === 0} aria-label={title}>{icons[icon]}</GridButton>
                    ))}
                </IconGrid>
            </PanelBody>
            <PanelTitle>Palety<Caret $size={4}/></PanelTitle>
        </Panel>
        <Panel $width={252} $last>
            <PanelBody $left={11}>
                <Big icon="switchWindow" label={'Przełącz\nokna'} width={50}/>
                <CaretButton aria-label="Lista okien"><Caret/></CaretButton>
                <Big icon="fileTabs" label={'Karty\nplików'} width={43} active/>
                <Big icon="layoutTabs" label={'Karty\nukładu'} width={44} active/>
                <Column>
                    <Small icon="tileH" title="Sąsiadująco w poziomie" left={3}/>
                    <Small icon="tileV" title="Sąsiadująco w pionie" left={3}/>
                    <Small icon="cascade" label="Kaskadowo" left={3}/>
                </Column>
            </PanelBody>
            <PanelTitle>
                <Launcher as="span"/>
                Interfejs
                <Launcher aria-label="Opcje interfejsu">{icons.launcher}</Launcher>
            </PanelTitle>
        </Panel>
    </Ribbon>
);

const CommandLine = () => {
    let [command, setCommand] = useState('');

    return (
        <CommandWindow>
            <CommandGrip>
                {icons.grip}
                <button aria-label="Zamknij wiersz polecenia">{icons.tabClose}</button>
                <button aria-label="Dostosuj">{icons.wrench}</button>
            </CommandGrip>
            <CommandMain>
                <History>
                    {historyLines.map((line, i) => <div key={i}>{line}</div>)}
                </History>
                <Prompt>
                    {icons.prompt}
                    <Caret $size={4} $color="#4d5666"/>
                    <PromptInput
                        aria-label="Polecenie"
                        placeholder="Wpisz polecenie"
                        value={command}
                        onChange={(e) => setCommand(e.target.value)}
                    />
                    <CaretUp $color="#4d5666"/>
                </Prompt>
            </CommandMain>
        </CommandWindow>
    );
}

const Model = () => (
    <Canvas>
        <Drawing fill="none" stroke="#e3e4e5">
            <path d="M653.500 578V65.500h551L1040 530"/>
            <path d="M722.500 607.500h437v102.500h-437zM722.500 647.500h437M722.500 678.500h437M940.500 647.500V710"/>
            <path d="M383 486.500h93.500M482.500 486.500H576M479.500 390v93.500M479.500 489.500V583M476.500 483.500h6v6h-6z"/>
            <g stroke="none" textAnchor="middle">
                <rect x="825" y="259" width="90" height="29" fill="#c9c9c9"/>
                <text x="870" y="281" fontSize="24" fill="#f7f7f7">17.8101</text>
                <rect x="886" y="610" width="111" height="35" fill="#c9c9c9"/>
                <text x="941" y="638" fontSize="30" fill="#f7f7f7">17.8101</text>
            </g>
        </Drawing>
        <ViewControls>
            <button aria-label="Minimalizuj rysunek">{icons.viewMin}</button>
            <button aria-label="Przywróć rysunek">{icons.viewRestore}</button>
            <button aria-label="Zamknij rysunek">{icons.viewClose}</button>
        </ViewControls>
        <UcsIcon width="84" height="88" fill="none" stroke="#e3e4e5">
            <path d="M7.500 30v50.500H58M3.500 75.500h9v9h-9z"/>
            <g stroke="none" fill="#e3e4e5" fontSize="18" textAnchor="middle">
                <text x="15" y="26">Y</text>
                <text x="68" y="79">X</text>
            </g>
        </UcsIcon>
        <CommandLine/>
    </Canvas>
);

const App = () => {
    let [tab, setTab] = useState('Widok');

    return (
        <Page>
            <GlobalStyle/>
            <Frame>
                <Title/>
                <Tabs>
                    {menuTabs.map(name => (
                        <Tab key={name} $active={name === tab} onClick={() => setTab(name)}>{name}</Tab>
                    ))}
                    <TabToggle aria-label="Minimalizuj wstążkę">
                        <ToggleBox><CaretUp/></ToggleBox>
                        <Caret/>
                    </TabToggle>
                </Tabs>
                <RibbonPanels/>
                <TabStrip $height={27} $top={3}>
                    <StripItem aria-label="Menu plików">{icons.menu}</StripItem>
                    <Slash $left={11}>{icons.slash}</Slash>
                    <StripItem $pad={7}>Początek</StripItem>
                    <ActiveItem $pad={14} $size={12}>Rysunek1*{icons.tabClose}</ActiveItem>
                    <StripItem $pad={8} aria-label="Nowy rysunek">{icons.plus}</StripItem>
                    <Slash>{icons.slash}</Slash>
                </TabStrip>
                <Rule/>
                <Model/>
                <Rule/>
                <Footer>
                    <TabStrip $height={32}>
                        <StripItem aria-label="Menu układów">{icons.menu}</StripItem>
                        <ActiveItem $pad={17} $left={9}>Model</ActiveItem>
                        <StripItem $pad={7} $size={12}>Układ1</StripItem>
                        <Slash>{icons.slash}</Slash>
                        <StripItem $pad={9} $size={12}>Układ2</StripItem>
                        <Slash>{icons.slash}</Slash>
                        <StripItem $pad={11} aria-label="Nowy układ">{icons.plus}</StripItem>
                        <Slash>{icons.slash}</Slash>
                    </TabStrip>
                    <StatusBar>
                        <StatusGroup>
                            <Status label="MODEL" $width={45}/>
                        </StatusGroup>
                        <StatusGroup>
                            <Status icon="grid" title="Siatka"/>
                            <Status icon="dots" title="Skok"/>
                            <StatusCaret title="Ustawienia skoku"/>
                        </StatusGroup>
                        <StatusGroup>
                            <Status icon="ortho" title="Orto"/>
                            <Status icon="polar" title="Śledzenie biegunowe" $active/>
                            <StatusCaret title="Ustawienia śledzenia"/>
                            <Status icon="iso" title="Rysunek izometryczny"/>
                            <StatusCaret title="Płaszczyzny izometryczne"/>
                        </StatusGroup>
                        <StatusGroup>
                            <Status icon="osnapTrack" title="Śledzenie lokalizacji" $active/>
                            <Status icon="osnap" title="Lokalizacja względem obiektu" $active/>
                            <StatusCaret title="Ustawienia lokalizacji"/>
                        </StatusGroup>
                        <StatusGroup>
                            <Status icon="annoVis" title="Widoczność opisów" $active/>
                            <Status icon="annoAuto" title="Automatyczna skala"/>
                            <Status icon="anno" title="Skala opisu"/>
                            <Status label="1:1" $width={17} $size={11}/>
                            <StatusCaret title="Lista skal"/>
                        </StatusGroup>
                        <StatusGroup>
                            <Status icon="gear" title="Obszar roboczy"/>
                            <StatusCaret title="Lista obszarów"/>
                        </StatusGroup>
                        <StatusGroup><Status icon="plusBig" title="Monitor adnotacji"/></StatusGroup>
                        <StatusGroup><Status icon="shapes" title="Izoluj obiekty"/></StatusGroup>
                        <StatusGroup><Status icon="perf" title="Wydajność grafiki" $active/></StatusGroup>
                        <StatusGroup><Status icon="clean" title="Czysty ekran"/></StatusGroup>
                        <StatusGroup><Status icon="menuBig" title="Dostosowanie"/></StatusGroup>
                    </StatusBar>
                </Footer>
            </Frame>
        </Page>
    )
}


export default App;
